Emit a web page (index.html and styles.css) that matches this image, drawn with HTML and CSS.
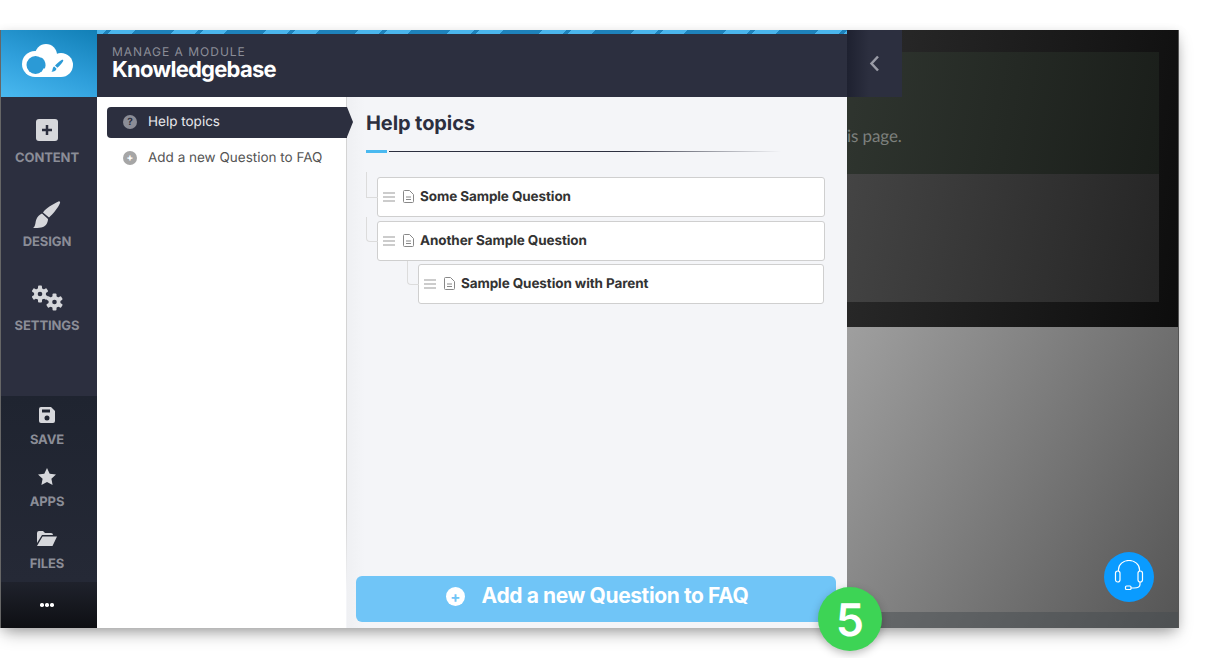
FILE: index.html
```html
<!DOCTYPE html>
<html lang="en">
<head>
<meta charset="utf-8">
<title>Knowledgebase</title>
<link rel="stylesheet" href="styles.css">
</head>
<body>
<div class="window">
  <aside class="sidebar">
    <div class="logo">
      <svg width="51" height="33" viewBox="0 0 51 33">
        <g fill="#fff"><circle cx="13" cy="20" r="13"/><circle cx="24" cy="11" r="11"/><circle cx="39" cy="21" r="12"/><rect x="13" y="20" width="26" height="13"/></g>
        <circle cx="13.500" cy="21" r="9" fill="#2b9ad6"/>
        <path d="M18 13.500c2.500 0 4 2 5 4.500.8 2.200.8 4.500-.5 7z" fill="#2b9ad6"/>
        <path fill="#2b9ad6" d="M40 15.800c.8-.5 1.600.3 1.200 1.100-1.500 2.700-3.800 5-5.900 6.900l-2.300-2.200c2-2.100 4.300-4.300 7-5.800ZM32.300 22.500l2.200 2.200c-.3 2.100-2.600 3.100-5 3 .9-.8.900-1.800 1.200-3 .2-1 .8-1.800 1.600-2.200Z"/>
      </svg>
    </div>
    <nav class="main-nav">
      <a class="nav-item item-content">
        <svg width="22" height="22" viewBox="0 0 22 22"><rect width="22" height="22" rx="3" fill="#d6d7db"/><path d="M11 6v10M6 11h10" stroke="#2c2f3f" stroke-width="2.500"/></svg>
        <span>CONTENT</span>
      </a>
      <a class="nav-item item-design">
        <svg width="28" height="28" viewBox="0 0 28 28"><path fill="#d6d7db" d="M25.500.500C26.500 0 27.500 1 27 2 25 7 20 13 16 16.500L10 11.500C13 7 20 3 25.500.500ZM9 12.500l6 5.500c0 3.500-2 7-5 8-3 1-7 1.300-10 1 3-2 2-6 3.500-9 1-2.300 3-4.500 5.500-5.500Z"/></svg>
        <span>DESIGN</span>
      </a>
      <a class="nav-item item-settings">
        <svg width="32" height="26" viewBox="0 0 32 26">
          <g fill="#d6d7db">
            <circle cx="9" cy="9" r="6"/>
            <rect x="7" y="0.500" width="4" height="17" rx="1"/>
            <rect x="7" y="0.500" width="4" height="17" rx="1" transform="rotate(60 9 9)"/>
            <rect x="7" y="0.500" width="4" height="17" rx="1" transform="rotate(120 9 9)"/>
            <circle cx="23.500" cy="17" r="6"/>
            <rect x="21.500" y="8.500" width="4" height="17" rx="1"/>
            <rect x="21.500" y="8.500" width="4" height="17" rx="1" transform="rotate(60 23.500 17)"/>
            <rect x="21.500" y="8.500" width="4" height="17" rx="1" transform="rotate(120 23.500 17)"/>
          </g>
          <circle cx="9" cy="9" r="2.300" fill="#2c2f3f"/><circle cx="23.500" cy="17" r="2.300" fill="#2c2f3f"/>
        </svg>
        <span>SETTINGS</span>
      </a>
    </nav>
    <nav class="tools-nav">
      <a class="tool-item tool-save">
        <svg width="16" height="16" viewBox="0 0 16 16"><path fill="#d6d7db" fill-rule="evenodd" d="M2 0h10l4 4v10a2 2 0 0 1-2 2H2a2 2 0 0 1-2-2V2a2 2 0 0 1 2-2Zm1 2.500v3h8v-3ZM8 8.500a2.500 2.500 0 1 0 0 5 2.500 2.500 0 0 0 0-5Z"/></svg>
        <span>SAVE</span>
      </a>
      <a class="tool-item tool-apps">
        <svg width="18" height="17" viewBox="0 0 18 17"><path fill="#d6d7db" d="M9 0l2.700 5.700 6.300.8-4.600 4.300 1.200 6.200L9 14l-5.600 3 1.200-6.200L0 6.500l6.300-.8Z"/></svg>
        <span>APPS</span>
      </a>
      <a class="tool-item tool-files">
        <svg width="20" height="15" viewBox="0 0 20 15"><path fill="#d6d7db" d="M0 2a2 2 0 0 1 2-2h4l2 2h6a2 2 0 0 1 2 2H5L0 12ZM5.500 5.500H20L15.500 15H0Z"/></svg>
        <span>FILES</span>
      </a>
    </nav>
    <div class="more"><i></i><i></i><i></i></div>
  </aside>

  <section class="panel">
    <header class="panel-head">
      <div class="eyebrow">MANAGE A MODULE</div>
      <h1>Knowledgebase</h1>
    </header>
    <div class="panel-body">
      <nav class="subnav">
        <a class="sub-item active">
          <span class="sub-icon">?</span>
          <span>Help topics</span>
        </a>
        <a class="sub-item">
          <span class="sub-icon">+</span>
          <span>Add a new Question to FAQ</span>
        </a>
      </nav>
      <main class="content">
        <h2>Help topics</h2>
        <div class="rule"><b></b><i></i></div>
        <div class="tree">
          <div class="node node-first">
            <svg class="grip" width="12" height="10" viewBox="0 0 12 10"><path d="M0 1h12M0 5h12M0 9h12" stroke="#999" stroke-width="1.200"/></svg>
            <svg class="doc" width="11" height="13" viewBox="0 0 11 13"><path fill="none" stroke="#888" d="M1.500.500h5l4 4v7a1 1 0 0 1-1 1h-8a1 1 0 0 1-1-1v-10a1 1 0 0 1 1-1ZM3 7h5M3 9.500h5"/></svg>
            <span>Some Sample Question</span>
          </div>
          <div class="node node-second">
            <svg class="grip" width="12" height="10" viewBox="0 0 12 10"><path d="M0 1h12M0 5h12M0 9h12" stroke="#999" stroke-width="1.200"/></svg>
            <svg class="doc" width="11" height="13" viewBox="0 0 11 13"><path fill="none" stroke="#888" d="M1.500.500h5l4 4v7a1 1 0 0 1-1 1h-8a1 1 0 0 1-1-1v-10a1 1 0 0 1 1-1ZM3 7h5M3 9.500h5"/></svg>
            <span>Another Sample Question</span>
          </div>
          <div class="node node-child">
            <svg class="grip" width="12" height="10" viewBox="0 0 12 10"><path d="M0 1h12M0 5h12M0 9h12" stroke="#999" stroke-width="1.200"/></svg>
            <svg class="doc" width="11" height="13" viewBox="0 0 11 13"><path fill="none" stroke="#888" d="M1.500.500h5l4 4v7a1 1 0 0 1-1 1h-8a1 1 0 0 1-1-1v-10a1 1 0 0 1 1-1ZM3 7h5M3 9.500h5"/></svg>
            <span>Sample Question with Parent</span>
          </div>
        </div>
        <button class="add-btn"><span class="add-icon">+</span><span>Add a new Question to FAQ</span></button>
      </main>
    </div>
  </section>

  <section class="preview">
    <div class="preview-top">
      <div class="preview-card">
        <div class="card-upper"><p>is page.</p></div>
        <div class="card-lower"></div>
      </div>
    </div>
    <div class="preview-bottom">
      <div class="preview-foot"></div>
    </div>
  </section>

  <div class="collapse-tab">
    <svg width="11" height="17" viewBox="0 0 11 17"><path d="M9 1.500 2.500 8.500 9 15.500" fill="none" stroke="#9a9ca6" stroke-width="2.500"/></svg>
  </div>
  <div class="support">
    <svg width="30" height="34" viewBox="0 0 30 34"><g fill="none" stroke="#fff" stroke-width="1.200"><path d="M4.500 11V9.500a10.500 9 0 0 1 21 0V11"/><rect x="1.500" y="11" width="4.500" height="11" rx="2.200"/><rect x="24" y="11" width="4.500" height="11" rx="2.200"/><path d="M26 22v2.500c0 2.500-3 3.500-6 3.500h-3"/><rect x="11.500" y="26" width="5.500" height="3.500" rx="1"/></g></svg>
  </div>
  <div class="step-badge">5</div>
</div>
</body>
</html>
```
FILE: styles.css
```css
* { box-sizing: border-box; }
html, body { margin: 0; padding: 0; background: #fff; }
body {
  padding: 30px 30px 0 0;
  height: 658px;
  overflow: hidden;
  font-family: Inter, "Liberation Sans", sans-serif;
  text-rendering: geometricPrecision;
}

.window {
  position: relative;
  display: flex;
  width: 1179px;
  height: 598px;
  border-left: 1px solid #666;
  border-right: 1px solid #555;
  box-shadow: 0 8px 16px -4px rgba(0, 0, 0, .35), 0 2px 10px rgba(0, 0, 0, .1);
}

.sidebar {
  width: 96px;
  flex: none;
  display: flex;
  flex-direction: column;
  background: #2c2f3f;
}
.logo {
  height: 67px;
  padding-right: 4px;
  display: flex;
  align-items: center;
  justify-content: center;
  background: linear-gradient(200deg, #117fb6 0%, #2f9fdb 55%, #4ab9f0 100%);
}
.logo svg { margin-top: -6px; }
.main-nav { height: 299px; display: flex; flex-direction: column; }
.nav-item {
  height: 84px;
  padding-right: 4px;
  display: flex;
  flex-direction: column;
  align-items: center;
  font-size: 13px;
  font-weight: 700;
  color: #8b8d97;
  letter-spacing: -.1px;
}
.nav-item svg { flex: none; }
.item-content { padding-top: 22px; gap: 9px; }
.item-design { padding-top: 20px; gap: 5px; }
.item-settings { padding-top: 20px; gap: 7px; }

.tools-nav {
  height: 186px;
  display: flex;
  flex-direction: column;
  background: linear-gradient(#1f2430, #252936);
}
.tool-item {
  height: 62px;
  padding-right: 4px;
  display: flex;
  flex-direction: column;
  align-items: center;
  font-size: 13px;
  font-weight: 700;
  color: #8b8d97;
  letter-spacing: -.1px;
}
.tool-save { padding-top: 11px; gap: 9px; }
.tool-apps { padding-top: 10px; gap: 9px; }
.tool-files { padding-top: 11px; gap: 10px; }
.more {
  flex: 1;
  padding-right: 4px;
  display: flex;
  align-items: center;
  justify-content: center;
  gap: 1.500px;
  background: linear-gradient(#1f222c, #0e0f13);
}
.more i { width: 3.500px; height: 3.500px; border-radius: 50%; background: #fff; }

.panel { width: 750px; flex: none; display: flex; flex-direction: column; position: relative; z-index: 2; }
.panel-head {
  height: 67px;
  padding: 14px 15px 0;
  color: #fff;
  background:
    repeating-linear-gradient(135deg, #4ab5ec 0 6.4px, #1e82bb 6.4px 10.6px, #4ab5ec 10.6px 26.9px, #1e82bb 26.9px 55.15px, #4ab5ec 55.15px 65.05px) top / 100% 4px no-repeat,
    #2c2f3f;
}
.eyebrow { font-size: 12px; line-height: 15px; letter-spacing: 1px; color: #8b8d97; }
.panel-head h1 { margin: -2px 0 0; font-size: 22px; line-height: 26px; font-weight: 700; letter-spacing: -.75px; }

.panel-body { flex: 1; display: flex; min-height: 0; background: #fff; }
.subnav { position: relative; z-index: 1; width: 249px; flex: none; padding: 10px 0 0 10px; }
.sub-item {
  position: relative;
  height: 31px;
  margin-bottom: 5px;
  padding: 0 0 1px 16px;
  display: flex;
  align-items: center;
  gap: 11px;
  font-size: 13.500px;
  color: #555;
}
.sub-icon {
  width: 14px; height: 14px; border-radius: 50%;
  display: flex; align-items: center; justify-content: center;
  background: #a6a6a6; color: #fff;
  font-size: 10px; font-weight: 700; line-height: 1;
}
.sub-item.active {
  width: 240px;
  color: #e8e8ec;
  background: #2c2f3f;
  border-radius: 4px 0 0 4px;
}
.sub-item.active::after {
  content: "";
  position: absolute;
  left: 100%; top: 0;
  border-left: 6px solid #2c2f3f;
  border-top: 15.500px solid transparent;
  border-bottom: 15.500px solid transparent;
}
.sub-item.active .sub-icon { background: #8b8d97; color: #2c2f3f; }

.content {
  position: relative;
  flex: 1;
  min-width: 0;
  padding: 14px 10px 0 19px;
  display: flex;
  flex-direction: column;
  background: linear-gradient(90deg, #eff0f3, #f4f5f8 18px);
  border-left: 1px solid;
  border-image: linear-gradient(#d4d4d4 78%, rgba(212, 212, 212, 0) 93%) 1;
}
.content h2 { margin: 0; font-size: 20px; line-height: 24px; font-weight: 700; color: #2c2f3f; letter-spacing: -.1px; }
.rule { margin-top: 15px; height: 3px; display: flex; align-items: center; gap: 2px; }
.rule b { width: 21px; height: 3px; background: #4ab9f0; }
.rule i { width: 392px; height: 1px; background: linear-gradient(90deg, #2c2f3f 60%, rgba(44, 47, 63, 0)); }

.tree { margin-top: 24px; flex: 1; }
.node {
  position: relative;
  height: 40px;
  display: flex;
  align-items: center;
  padding: 0 0 1px 5px;
  background: #fff;
  border: 1px solid #cfcfcf;
  border-radius: 3px;
  font-size: 13.500px;
  font-weight: 700;
  letter-spacing: -.1px;
  color: #333;
}
.node .grip { margin-right: 8px; }
.node .doc { margin-right: 6px; }
.node-first { margin-left: 11px; width: 448px; }
.node-second { margin: 4px 0 3px 11px; width: 448px; }
.node-child { margin-left: 52px; width: 406px; }
.node::before {
  content: "";
  position: absolute;
  border-left: 1px solid #dcdcdc;
  border-bottom: 1px solid #dcdcdc;
}
.node-first::before { left: -12px; top: -6px; width: 11px; height: 25px; }
.node-second::before { left: -12px; top: -5px; width: 11px; height: 24px; border-bottom-left-radius: 4px; }
.node-child::before { left: -12px; top: -4px; width: 11px; height: 23px; border-bottom-left-radius: 4px; }

.add-btn {
  height: 46px;
  width: 480px;
  margin: 0 0 6px -10px;
  flex: none;
  display: flex;
  align-items: center;
  justify-content: center;
  gap: 17px;
  border: 0;
  border-radius: 6px;
  background: #70c5f7;
  color: #fff;
  font: 700 21px/24px Inter, "Liberation Sans", sans-serif;
  letter-spacing: -.4px;
  padding: 0 0 6px 2px;
}
.add-icon {
  width: 19px; height: 19px; border-radius: 50%;
  display: flex; align-items: center; justify-content: center;
  background: #fff; color: #70c5f7;
  font-size: 15px; line-height: 1;
}

.preview { flex: 1; display: flex; flex-direction: column; min-width: 0; }
.preview-top {
  height: 297px;
  padding: 22px 19px 25px 0;
  background: linear-gradient(100deg, #2b2b2b, #0d0d0d);
}
.preview-card { height: 250px; display: flex; flex-direction: column; }
.card-upper {
  height: 122px;
  background: linear-gradient(100deg, #2f352f, #1a1e1a);
  overflow: hidden;
}
.card-upper p {
  margin: 74px 0 0;
  font: 17px/20px Lato, "Liberation Sans", sans-serif;
  letter-spacing: -.1px;
  color: #7d807d;
}
.card-lower { flex: 1; background: linear-gradient(100deg, #444, #252525); }
.preview-bottom {
  flex: 1;
  position: relative;
  display: flex;
  flex-direction: column;
  justify-content: flex-end;
  background: linear-gradient(120deg, #9f9f9f, #555);
}
.preview-foot { height: 16px; background: rgba(70, 75, 80, .5); }

.collapse-tab {
  position: absolute;
  left: 846px; top: 0;
  z-index: 3;
  width: 55px; height: 67px;
  display: flex; align-items: center; justify-content: center;
  background: linear-gradient(90deg, #1e2130, #2c2f3f 40%);
}
.support {
  position: absolute;
  left: 1103px; top: 522px;
  width: 50px; height: 50px;
  border-radius: 50%;
  display: flex; align-items: center; justify-content: center;
  background: #0a9bff;
}
.step-badge {
  position: absolute;
  left: 817px; top: 557px;
  z-index: 4;
  width: 64px; height: 64px;
  border-radius: 50%;
  display: flex; align-items: center; justify-content: center;
  background: #3dd455;
  color: #fff;
  font-size: 45px;
  font-weight: 600;
  box-shadow: 0 3px 8px rgba(0, 0, 0, .25);
}
```
